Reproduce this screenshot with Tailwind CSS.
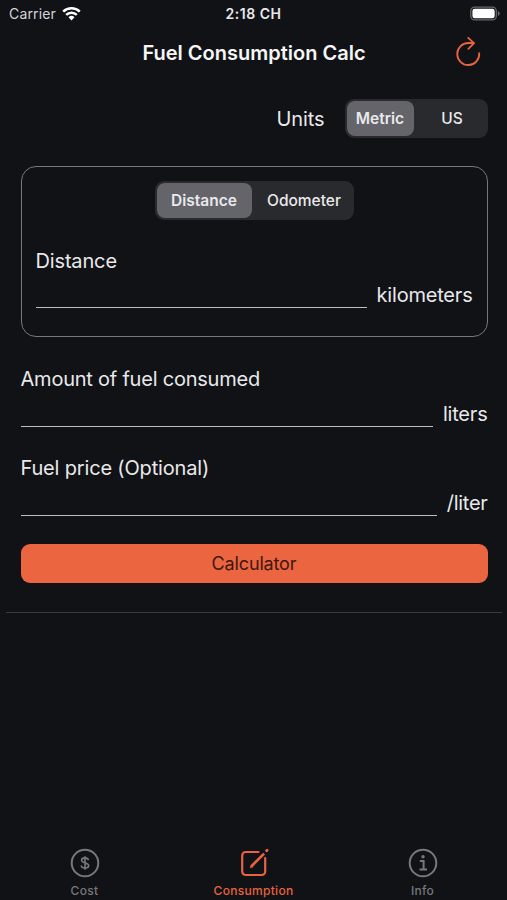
<!DOCTYPE html>
<html lang="en">
<head>
<meta charset="utf-8">
<title>Fuel Consumption Calc</title>
<script src="https://cdn.jsdelivr.net/npm/@tailwindcss/browser@4"></script>
</head>
<body class="bg-[#111216]">
<div class="w-[507px] h-[900px] flex flex-col overflow-hidden bg-[#111216] text-[#e9e9eb] font-['Inter',sans-serif] text-[20px] leading-[24px] whitespace-nowrap">
  <div class="h-[28px] grid grid-cols-3 items-center pl-[9px] pr-[7px] text-[14px] leading-[18px]">
    <div class="flex items-center gap-[6px]">
      <span class="text-[#d5d5d8] tracking-[0.15px]">Carrier</span>
      <svg class="-mt-[2px]" width="19" height="15" viewBox="0 0 19 15" fill="none" stroke="#fff" stroke-width="2.5"><path d="M1.2 5.6a11.8 11.8 0 0 1 16.6 0"/><path d="M4.2 8.9a7.5 7.5 0 0 1 10.6 0"/><path d="M9.5 14.4 6.5 11.3a4.3 4.3 0 0 1 6 0Z" fill="#fff" stroke="none"/></svg>
    </div>
    <span class="text-center font-semibold tracking-[0.55px] -ml-[2px]">2:18 CH</span>
    <svg class="justify-self-end -mt-[2px]" width="30" height="15" viewBox="0 0 31 15"><rect x=".8" y=".8" width="26.4" height="13.4" rx="4" fill="#111216" stroke="#67686b" stroke-width="1.3"/><rect x="2.5" y="2.5" width="23" height="10" rx="2.4" fill="#fff"/><path d="M28.8 5v5q2-.8 2-2.5t-2-2.5Z" fill="#67686b"/></svg>
  </div>
  <header class="h-[48px] relative flex justify-center items-center">
    <h1 class="text-[20px] font-semibold text-[#f6f6f7] pl-px pt-px">Fuel Consumption Calc</h1>
    <svg class="absolute left-[454px] top-[7px]" width="30" height="32" viewBox="0 0 30 32" fill="none" stroke="#e8633f" stroke-width="1.8" stroke-linecap="round" stroke-linejoin="round"><path d="M25.2 18.2A11 11 0 1 1 14.2 8h5.5"/><path d="M14.2 2.8 20 8.2l-5.6 5.6"/></svg>
  </header>
  <main class="flex flex-col pl-[20.5px] pr-[19.5px]">
    <div class="h-[39px] mt-[23px] flex items-center justify-end gap-5">
      <span class="tracking-[-0.1px]">Units</span>
      <div class="w-[143px] h-[39px] rounded-[9px] bg-[#292a2e] p-[2px] flex text-[15.5px] font-medium text-center leading-[35px]">
        <span class="w-[67px] rounded-[8px] bg-[#64646a] font-semibold">Metric</span>
        <span class="flex-1 pl-[5px]">US</span>
      </div>
    </div>
    <section class="h-[171px] mt-[28px] w-[467px] border border-[#77787c] rounded-[15px] px-[14px] pt-[14px]">
      <div class="mx-auto w-[199px] h-[39px] rounded-[9px] bg-[#292a2e] p-[2px] flex text-[15.5px] font-medium text-center leading-[35px]">
        <span class="w-[95px] rounded-[8px] bg-[#64646a] font-semibold">Distance</span>
        <span class="flex-1 pl-[5px]">Odometer</span>
      </div>
      <label class="block mt-[29px] tracking-[-0.15px]">Distance</label>
      <div class="flex mt-[10px] h-[25px] gap-[10px]"><div class="flex-1 border-b border-[#bdbdc0]"></div><span class="tracking-[-0.2px]">kilometers</span></div>
    </section>
    <label class="block mt-[30px] tracking-[-0.22px]">Amount of fuel consumed</label>
    <div class="flex mt-[11px] h-[25px] gap-[10px]"><div class="flex-1 border-b border-[#bdbdc0]"></div><span class="tracking-[-0.2px]">liters</span></div>
    <label class="block mt-[29px] tracking-[-0.17px]">Fuel price (Optional)</label>
    <div class="flex mt-[11px] h-[25px] gap-[10px]"><div class="flex-1 border-b border-[#bdbdc0]"></div><span class="tracking-[-0.3px]">/liter</span></div>
    <button class="mt-[28px] h-[39px] w-[467px] rounded-[9px] bg-[#eb6541] text-[#40170f] text-[18px] tracking-[-0.15px]">Calculator</button>
  </main>
  <div class="ml-[6px] mr-[5px] mt-[29px] h-px bg-[#3a3b3e]"></div>
  <nav class="mt-auto h-[52px] grid grid-cols-3 text-[12px] leading-[14px] font-medium text-[#77787b] tracking-[0.3px]">
    <div class="flex flex-col items-center">
      <svg width="30" height="30" viewBox="0 0 30 30" fill="none" stroke="currentColor"><circle cx="15" cy="15" r="13.3" stroke-width="2"/><path d="M18.4 12.2c-.2-1.6-1.6-2.3-3.4-2.3s-3.4.8-3.4 2.4c0 3.5 7.1 1.8 7.1 5.3 0 1.6-1.6 2.5-3.7 2.5s-3.6-.9-3.8-2.6M15 8.2v13.6" stroke-width="1.6"/></svg>
      <span class="mt-[6px]">Cost</span>
    </div>
    <div class="flex flex-col items-center text-[#e8633f]">
      <svg width="30" height="30" viewBox="0 0 30 30" fill="none" stroke="currentColor" stroke-width="2.2" stroke-linecap="round"><path d="M19.5 4H6.7a3.5 3.5 0 0 0-3.5 3.5v16A3.5 3.5 0 0 0 6.7 27h16a3.5 3.5 0 0 0 3.5-3.5V10"/><path d="m12.5 18.2 12.6-12.6" stroke-width="2.7" stroke-linecap="butt"/><path d="m27.6 2.8.5-.5" stroke-width="2.8"/><path d="m11.3 19.5.6-2.3 1.7 1.7Z" fill="currentColor" stroke-width=".6"/></svg>
      <span class="mt-[6px]">Consumption</span>
    </div>
    <div class="flex flex-col items-center">
      <svg width="30" height="30" viewBox="0 0 30 30" fill="none" stroke="currentColor" stroke-width="2"><circle cx="15" cy="15" r="13.3"/><path d="M11.8 13h3.8v8.5M11.5 21.5h7.5"/><circle cx="15" cy="8.8" r="1.7" fill="currentColor" stroke="none"/></svg>
      <span class="mt-[6px]">Info</span>
    </div>
  </nav>
</div>
</body>
</html>
